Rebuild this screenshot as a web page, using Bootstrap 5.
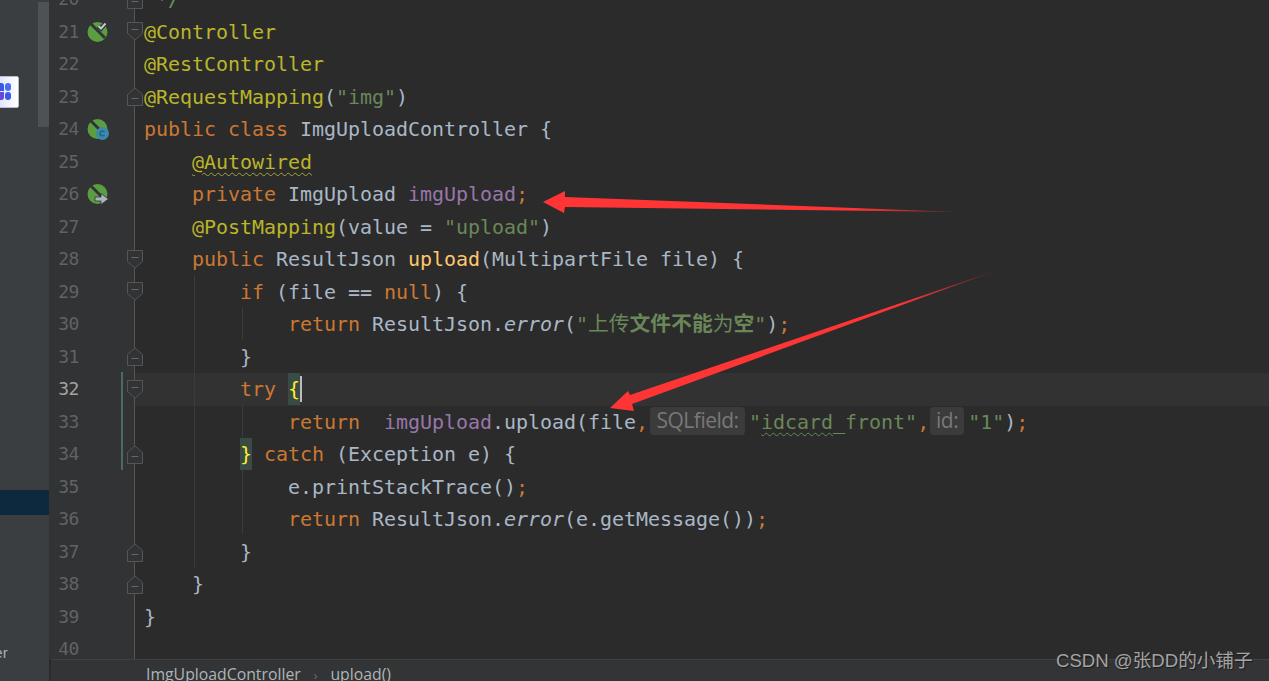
<!DOCTYPE html>
<html lang="zh">
<head>
<meta charset="utf-8">
<title>ImgUploadController</title>
<link href="https://cdn.jsdelivr.net/npm/bootstrap@5.3.0/dist/css/bootstrap.min.css" rel="stylesheet">
<style>
html,body{height:681px;overflow:hidden;background:#2b2b2b}
.ide{height:681px;width:1269px;position:relative;overflow:hidden}
.side{width:49px;background:#3b3e40;position:relative;font-family:"Liberation Sans",sans-serif}
.side-sel{height:25px;background:#0d293e;margin-top:490px}
.side-txt{margin-top:auto;margin-bottom:19px;margin-left:-9px;color:#a9aeb1;font-size:15px;line-height:18px}
.thumb{position:absolute;left:38px;top:2px;width:11px;height:125px;background:#4f5254}
.widget{position:absolute;left:-3px;top:76px;width:22px;height:32px;background:linear-gradient(90deg,#dfe4ff,#fff);border:1px solid #b9bcc4;border-radius:2px;display:flex;align-items:center;justify-content:end;padding-right:7px}
.main{width:1220px;min-width:0}
.lines{margin-top:-17px;flex:1 1 auto;overflow:hidden;font-family:"DejaVu Sans Mono",monospace;font-size:20px;letter-spacing:-.04px;color:#a9b7c6}
.ln{height:32.53px;line-height:32.53px;white-space:pre}
.gut{width:70px;flex:none;background:#313335;color:#606366;font-size:18px}
.num{width:30px;text-align:right;letter-spacing:-.4px}
.ico{width:24px;margin-left:8px;line-height:0}
.chg{flex:none;width:25px;background:linear-gradient(90deg,#313335 15px,#555 15px,#555 16px,#2b2b2b 16px)}
.chg svg{margin-left:8px}
.ln.cur .num{color:#a4a3a3}
.ln.cur .chg{background:linear-gradient(90deg,#313335 15px,#555 15px,#555 16px,#323232 16px)}
.ln.cur .code{background:#323232}
.code{flex:1 1 auto;min-width:0}
.k{color:#cc7832}.a{color:#bbb529}.s{color:#6a8759}.f{color:#9876aa}.fn{color:#ffc66d}.c{color:#629755}
.i{font-style:italic}
.br{background:#3a4b45;color:#ffef28;display:inline-block;line-height:32px;height:32px}
.caret{display:inline-block;width:2px;height:26px;background:#bbb;vertical-align:-6px;margin-right:-2px}
.cj{font-family:"DejaVu Sans Mono","Noto Sans CJK SC",monospace;font-size:20.8px}
.b{font-weight:700}
.wv{text-decoration:underline wavy;text-decoration-thickness:1px;text-underline-offset:3px}
.wa{text-decoration-color:#a5a33c}
.ws{text-decoration-color:#5e8a4f}
.hint{display:inline-block;height:28px;line-height:27px;background:#3b3b3b;color:#787878;border-radius:4px;font-family:"Open Sans","Liberation Sans",sans-serif;font-size:21px;letter-spacing:-.5px;padding:0;text-align:center;vertical-align:1px}
.h1{width:95px;margin:0 4px 0 2px}
.h2{width:34px;margin:0 4px 0 1px}
.crumbs{height:22px;flex:none;margin-left:2px;background:#323436;border-top:1px solid #3f4143;color:#aeb4b8;font-family:"Open Sans","Liberation Sans",sans-serif;font-size:15.8px;line-height:29px;padding-left:95px;white-space:pre;overflow:hidden}
.crumbs .sep{color:#6c6f71;font-size:12px;margin:0 13px}
.guide{position:absolute;width:1px;background:#3b3b3b}
.g1{left:194px;top:275px;height:292px}
.g2{left:242px;top:307px;height:33px}
.g3{left:242px;top:405px;height:32px}
.g4{left:242px;top:470px;height:64px}
.chgbar{position:absolute;left:121px;top:372px;width:1.5px;height:98px;background:#4d6b5c}
.arrows{position:absolute;left:0;top:0;pointer-events:none}
.stamp{position:absolute;left:1056px;top:648px;color:#a3a3a3;font-family:"Liberation Sans","Noto Sans CJK SC",sans-serif;font-size:18.6px;line-height:26px;text-shadow:1px 1px 1px #1c1c1c;white-space:pre}
</style>
</head>
<body>
<svg width="0" height="0" class="d-block position-absolute">
<defs>
<symbol id="fd" viewBox="0 0 16 19"><path d="M.5.5h15v11l-7.5 6.500L.5 11.500z" fill="#313335" stroke="#555"/><path d="M4.500 7.500h7" stroke="#666"/></symbol>
<symbol id="fu" viewBox="0 0 16 19"><path d="M.5 18.500h15v-11L8 1 .5 7.500z" fill="#313335" stroke="#555"/><path d="M4.500 11.500h7" stroke="#666"/></symbol>
<symbol id="bean" viewBox="0 0 22 22"><circle cx="10.500" cy="11" r="10" fill="#5a9e41"/><path d="M4 3l14 14" stroke="#313335" stroke-width="2.800"/></symbol>
</defs>
</svg>
<div class="ide d-flex">
  <div class="side d-flex flex-column">
    <div class="side-sel"></div>
    <div class="side-txt">ler</div>
    <div class="thumb"></div>
    <div class="widget"><svg width="12" height="18" viewBox="0 0 12 18"><path d="M0 0h2.500a2.500 3 0 0 1 2.500 3v5H0z" fill="#3557e8"/><rect x="6" y="0" width="6" height="8" rx="3" fill="#4a6cf0"/><path d="M0 9h5v5a2.500 3 0 0 1-2.500 3H0z" fill="#6a46d8"/><rect x="6" y="9" width="6" height="8" rx="3" fill="#3a5ae8"/></svg></div>
  </div>
  <div class="main d-flex flex-column">
    <div class="lines">
      <div class="ln d-flex"><div class="gut d-flex"><div class="num">20</div></div><div class="chg d-flex align-items-center"><svg width="16" height="19"><use href="#fu"/></svg></div><div class="code"><span class="c"> */</span></div></div>
      <div class="ln d-flex"><div class="gut d-flex"><div class="num">21</div><div class="ico d-flex align-items-center"><svg width="22" height="22" viewBox="0 0 22 22"><use href="#bean"/><path d="M11.500 5l2.500 2.500 4.500-5" fill="none" stroke="#313335" stroke-width="4.500"/><path d="M11.500 5l2.500 2.500 4.500-5" fill="none" stroke="#c3c9cf" stroke-width="2"/></svg></div></div><div class="chg d-flex align-items-center"><svg width="16" height="19"><use href="#fd"/></svg></div><div class="code"><span class="a">@Controller</span></div></div>
      <div class="ln d-flex"><div class="gut d-flex"><div class="num">22</div></div><div class="chg"></div><div class="code"><span class="a">@RestController</span></div></div>
      <div class="ln d-flex"><div class="gut d-flex"><div class="num">23</div></div><div class="chg d-flex align-items-center"><svg width="16" height="19"><use href="#fu"/></svg></div><div class="code"><span class="a">@RequestMapping</span>(<span class="s">"img"</span>)</div></div>
      <div class="ln d-flex"><div class="gut d-flex"><div class="num">24</div><div class="ico d-flex align-items-center"><svg width="22" height="22" viewBox="0 0 22 22"><use href="#bean"/><circle cx="15.500" cy="15.500" r="6.500" fill="#3a8aab"/><path d="M17.500 14a2.500 2.500 0 1 0 0 3" fill="none" stroke="#22566c" stroke-width="1.100"/></svg></div></div><div class="chg"></div><div class="code"><span class="k">public class </span>ImgUploadController {</div></div>
      <div class="ln d-flex"><div class="gut d-flex"><div class="num">25</div></div><div class="chg"></div><div class="code">    <span class="a wv wa">@Autowired</span></div></div>
      <div class="ln d-flex"><div class="gut d-flex"><div class="num">26</div><div class="ico d-flex align-items-center"><svg width="22" height="22" viewBox="0 0 22 22"><use href="#bean"/><path d="M8 14h6v-3.500l7.500 5.500-7.500 5.500V18H8z" fill="#aab4bd" stroke="#313335" stroke-width=".8"/></svg></div></div><div class="chg"></div><div class="code">    <span class="k">private </span>ImgUpload <span class="f">imgUpload</span><span class="k">;</span></div></div>
      <div class="ln d-flex"><div class="gut d-flex"><div class="num">27</div></div><div class="chg"></div><div class="code">    <span class="a">@PostMapping</span>(value = <span class="s">"upload"</span>)</div></div>
      <div class="ln d-flex"><div class="gut d-flex"><div class="num">28</div></div><div class="chg d-flex align-items-center"><svg width="16" height="19"><use href="#fd"/></svg></div><div class="code">    <span class="k">public </span>ResultJson <span class="fn">upload</span>(MultipartFile file) {</div></div>
      <div class="ln d-flex"><div class="gut d-flex"><div class="num">29</div></div><div class="chg d-flex align-items-center"><svg width="16" height="19"><use href="#fd"/></svg></div><div class="code">        <span class="k">if </span>(file == <span class="k">null</span>) {</div></div>
      <div class="ln d-flex"><div class="gut d-flex"><div class="num">30</div></div><div class="chg"></div><div class="code">            <span class="k">return </span>ResultJson.<span class="i">error</span>(<span class="s">"<span class="cj">上传<span class="b">文件不能</span>为<span class="b">空</span></span>"</span>)<span class="k">;</span></div></div>
      <div class="ln d-flex"><div class="gut d-flex"><div class="num">31</div></div><div class="chg d-flex align-items-center"><svg width="16" height="19"><use href="#fu"/></svg></div><div class="code">        }</div></div>
      <div class="ln d-flex cur"><div class="gut d-flex"><div class="num">32</div></div><div class="chg d-flex align-items-center"><svg width="16" height="19"><use href="#fd"/></svg></div><div class="code">        <span class="k">try </span><span class="br">{</span><span class="caret"></span></div></div>
      <div class="ln d-flex"><div class="gut d-flex"><div class="num">33</div></div><div class="chg"></div><div class="code">            <span class="k">return  </span><span class="f">imgUpload</span>.upload(file<span class="k">,</span><span class="hint h1">SQLfield:</span><span class="s">"<span class="wv ws">idcard</span>_front"</span><span class="k">,</span><span class="hint h2">id:</span><span class="s">"1"</span>)<span class="k">;</span></div></div>
      <div class="ln d-flex"><div class="gut d-flex"><div class="num">34</div></div><div class="chg d-flex align-items-center"><svg width="16" height="19"><use href="#fu"/></svg></div><div class="code">        <span class="br">}</span> <span class="k">catch </span>(Exception e) {</div></div>
      <div class="ln d-flex"><div class="gut d-flex"><div class="num">35</div></div><div class="chg"></div><div class="code">            e.printStackTrace()<span class="k">;</span></div></div>
      <div class="ln d-flex"><div class="gut d-flex"><div class="num">36</div></div><div class="chg"></div><div class="code">            <span class="k">return </span>ResultJson.<span class="i">error</span>(e.getMessage())<span class="k">;</span></div></div>
      <div class="ln d-flex"><div class="gut d-flex"><div class="num">37</div></div><div class="chg d-flex align-items-center"><svg width="16" height="19"><use href="#fu"/></svg></div><div class="code">        }</div></div>
      <div class="ln d-flex"><div class="gut d-flex"><div class="num">38</div></div><div class="chg d-flex align-items-center"><svg width="16" height="19"><use href="#fu"/></svg></div><div class="code">    }</div></div>
      <div class="ln d-flex"><div class="gut d-flex"><div class="num">39</div></div><div class="chg"></div><div class="code">}</div></div>
      <div class="ln d-flex"><div class="gut d-flex"><div class="num">40</div></div><div class="chg"></div><div class="code"></div></div>
    </div>
    <div class="crumbs">ImgUploadController<span class="sep">›</span>upload()</div>
  </div>
  <div class="guide g1"></div><div class="guide g2"></div><div class="guide g3"></div><div class="guide g4"></div>
  <div class="chgbar"></div>
  <svg class="arrows" width="1269" height="681" viewBox="0 0 1269 681">
    <defs>
      <linearGradient id="t1" gradientUnits="userSpaceOnUse" x1="543" y1="202" x2="958" y2="212"><stop offset=".75" stop-color="#ff3535"/><stop offset="1" stop-color="#ff3535" stop-opacity=".3"/></linearGradient>
      <linearGradient id="t2" gradientUnits="userSpaceOnUse" x1="610" y1="408" x2="995" y2="271"><stop offset=".75" stop-color="#ff3535"/><stop offset="1" stop-color="#ff3535" stop-opacity=".3"/></linearGradient>
    </defs>
    <polygon points="543,202 565,191 565,197 958,212 565,207 564,213" fill="url(#t1)"/>
    <polygon points="610,408 628,391 630,395 995,271 632,404 634,411" fill="url(#t2)"/>
  </svg>
  <div class="stamp">CSDN @张DD的小铺子</div>
</div>
<script src="https://cdn.jsdelivr.net/npm/bootstrap@5.3.0/dist/js/bootstrap.bundle.min.js"></script>
</body>
</html>
